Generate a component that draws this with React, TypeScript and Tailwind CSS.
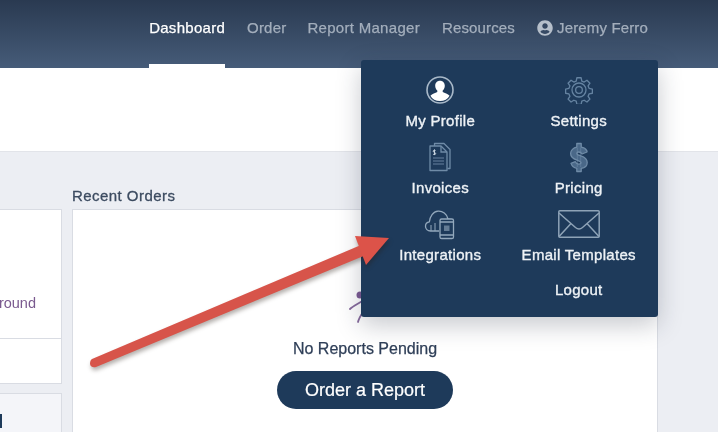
import { FaUserCircle } from "react-icons/fa";

function ProfileIcon() {
    return (
        <svg width="32" height="32" viewBox="0 0 32 32" fill="none">
            <circle cx="16" cy="16" r="13" fill="#1e3a5a" stroke="#a9b9c9" strokeWidth="1.600" />
            <path d="M16 6.800c-3 0-4.800 2.300-4.800 5 0 2 .9 3.800 2.100 4.800v1.500c-1.900 1.200-5.200 1.700-6.900 3.600 1.700 3.400 5.400 5.300 9.600 5.300s7.900-1.900 9.600-5.300c-1.700-1.900-5-2.400-6.900-3.600v-1.500c1.200-1 2.100-2.800 2.100-4.800 0-2.700-1.800-5-4.800-5z" fill="#ffffff" />
        </svg>
    );
}

function GearIcon() {
    return (
        <svg width="28" height="28" viewBox="0 0 32 32" fill="none" stroke="#6583a1" strokeWidth="1.500">
            <path d="M13.600 2h4.800l.8 3.800 2.700 1.100 3.200-2.100 3.400 3.400-2.100 3.200 1.100 2.700 3.800.8v4.800l-3.800.8-1.100 2.700 2.100 3.200-3.400 3.400-3.200-2.100-2.700 1.100-.8 3.800h-4.800l-.8-3.800-2.700-1.100-3.200 2.100-3.400-3.400 2.100-3.200-1.100-2.700-3.800-.8v-4.800l3.800-.8 1.100-2.700-2.100-3.200 3.400-3.400 3.200 2.100 2.700-1.100z" strokeLinejoin="round" />
            <circle cx="16" cy="16" r="8" />
            <circle cx="16" cy="16" r="3.800" />
        </svg>
    );
}

function InvoiceIcon() {
    return (
        <svg width="32" height="32" viewBox="0 0 32 32" fill="none" stroke="#6f8ba7" strokeWidth="1.300">
            <path d="M10.500 5V2.500h9.500l6 6v19h-2.500" strokeLinejoin="round" />
            <path d="M6 5h11l6 6v18.500H6z" strokeLinejoin="round" />
            <path d="M17 5v6h6" />
            <path d="M9 17h11M9 20h11M9 23h11" strokeWidth="1.500" opacity="0.6" />
            <path d="M11.500 9.500c-.8-.6-2.300-.4-2.300.7 0 1.400 2.500 1 2.500 2.400 0 1.100-1.700 1.300-2.600.6M10.500 8.500v5.500" stroke="#c7d3de" strokeWidth="1" />
        </svg>
    );
}

function DollarIcon() {
    return (
        <svg width="32" height="32" viewBox="0 0 32 32" fill="#4a6888" stroke="#6f8ba7" strokeWidth="1.300">
            <path d="M24 11v-1c-1.200-2.200-3.600-3.500-5.800-3.800V2.500h-4.400v3.700C10.400 6.700 7.600 9.300 7.600 12.500c0 3.800 2.800 5.400 6.400 6.600 2.600.9 4 1.300 4 2.500 0 1-1 1.500-2.200 1.500-1.600 0-2.800-.9-3.500-2.400L8 22.400c1 2.800 3.200 4.500 5.800 4.900v3.200h4.400v-3.200c3.400-.5 6-2.700 6-5.900 0-3.800-2.800-5.400-6.400-6.600-2.600-.9-4-1.300-4-2.400 0-.9.9-1.400 2-1.400 1.500 0 2.500.7 3.200 2z" strokeLinejoin="round" />
            <path d="M14.300 7v19M17.700 7v19" fill="none" strokeWidth="0.900" opacity="0.6" />
        </svg>
    );
}

function CloudIcon() {
    return (
        <svg width="32" height="32" viewBox="0 0 32 32" fill="none" stroke="#93a8bc" strokeWidth="1.300">
            <path d="M15 23H6.500C3.500 23 1.500 20.800 1.500 18.300c0-2.300 1.700-4.200 3.900-4.500C6 8.500 9 3.600 14 3.200c4.500-.4 9 2.800 10 7.800.3.100 2 .2 3.500.7" strokeLinejoin="round" />
            <rect x="16" y="11" width="13.500" height="19.500" rx="1.600" fill="#1e3a5a" />
            <path d="M16 14h13.500M16 27h13.500" />
            <rect x="20" y="17.500" width="5.500" height="5.500" fill="#93a8bc" stroke="none" opacity="0.6" />
            <path d="M7 17v6M11 15v8" strokeWidth="1" />
        </svg>
    );
}

function EnvelopeIcon() {
    return (
        <svg width="42" height="28" viewBox="0 0 42 28" fill="none" stroke="#8ea3b7" strokeWidth="1.500">
            <rect x="0.800" y="0.800" width="40.400" height="26.400" rx="1" />
            <path d="M1 3l16.500 14.500c2 1.600 5 1.600 7 0L41 3M1 26.500l12-13M41 26.500l-12-13" />
        </svg>
    );
}

const menu = [
    { label: "My Profile", icon: <ProfileIcon /> },
    { label: "Settings", icon: <GearIcon /> },
    { label: "Invoices", icon: <InvoiceIcon /> },
    { label: "Pricing", icon: <DollarIcon /> },
    { label: "Integrations", icon: <CloudIcon /> },
    { label: "Email Templates", icon: <EnvelopeIcon /> },
];

export default function App() {
    return (
        <div className="relative w-[718px] h-[432px] overflow-hidden bg-[#eceef3] font-['Liberation_Sans',Arial,sans-serif] blur-[0.4px]">
            <header className="h-[68px] bg-gradient-to-b from-[#2a3a51] to-[#465c79] flex justify-end items-start pr-[70px] gap-[22px] text-[15px] text-[#a3aebc] [-webkit-text-stroke:0.25px]">
                <a className="h-[68px] pt-[19px] leading-[18px] text-white border-b-[4px] border-white tracking-[0.28px]">Dashboard</a>
                <a className="-mr-[1px] pt-[19px] leading-[18px] tracking-[0.2px]">Order</a>
                <a className="pt-[19px] leading-[18px] tracking-[0.3px]">Report Manager</a>
                <a className="pt-[19px] leading-[18px] tracking-[0.15px]">Resources</a>
                <a className="pt-[19px] leading-[18px] flex items-center gap-[4px] tracking-[0.15px]">
                    <FaUserCircle className="w-4 h-4 text-[#b6bfca]" />
                    Jeremy Ferro
                </a>
            </header>
            <div className="h-[84px] bg-white border-b border-[#e2e4e9]" />
            <main className="flex gap-[10px]">
                <div className="w-[62px] shrink-0 pt-[57px] flex flex-col">
                    <div className="h-[130px] bg-white border border-l-0 border-[#d9dce3] flex justify-end items-center pr-[25px] pt-[60px] overflow-hidden">
                        <span className="text-[14.5px] text-[#7a5a8f] whitespace-nowrap">round</span>
                    </div>
                    <div className="h-[45px] bg-white border border-t-0 border-l-0 border-[#d9dce3]" />
                    <div className="mt-[9px] h-[60px] bg-[#f4f5f9] border border-l-0 border-[#d9dce3] pt-[20px] overflow-hidden">
                        <span className="block w-[2px] h-[14px] bg-[#1e3a5a]" />
                    </div>
                </div>
                <div className="w-[586px] shrink-0 pt-[35px]">
                    <h2 className="text-[15px] leading-[18px] mb-[4px] text-[#3c4b60] tracking-[0.45px] [-webkit-text-stroke:0.3px]">Recent Orders</h2>
                    <div className="h-[240px] bg-white border border-[#d9dce3] flex flex-col items-center pt-[80px]">
                        <svg width="34" height="34" viewBox="0 0 34 34" fill="none" stroke="#866a9c" strokeWidth="1.800" className="ml-[1px]">
                            <circle cx="11" cy="5" r="3.500" fill="#7b5a93" stroke="none" />
                            <path d="M1 19c3-3 8-5 14-9" strokeLinecap="round" />
                            <path d="M9 32c1-4 3-7 5-10" strokeLinecap="round" />
                        </svg>
                        <p className="mt-[15px] text-[16px] leading-[20px] text-[#2f3f58] [-webkit-text-stroke:0.25px]">No Reports Pending</p>
                        <button className="mt-[12px] w-[176px] h-[38px] rounded-full bg-[#1e3a5a] text-white text-[18px] [-webkit-text-stroke:0.2px]">Order a Report</button>
                    </div>
                </div>
            </main>

            {/* dropdown sits over the page */}
            <div className="absolute left-[361px] top-[60px] w-[297px] rounded-[3px] bg-[#1e3a5a] px-[10px] pt-[14px] pb-[17px] grid grid-cols-2 gap-x-0 gap-y-[10px] shadow-[0_8px_24px_rgba(30,40,60,0.25)] [-webkit-text-stroke:0.35px]">
                {menu.map((item) => (
                    <div key={item.label} className="flex flex-col items-center">
                        <div className="h-8 flex items-center justify-center">{item.icon}</div>
                        <span className="mt-[5px] text-[15px] leading-5 text-[#eef2f6] whitespace-nowrap tracking-[0.3px]">{item.label}</span>
                    </div>
                ))}
                <span className="col-start-2 text-center mt-[5px] text-[15px] leading-5 text-[#eef2f6] tracking-[0.3px]">Logout</span>
            </div>

            {/* annotation arrow */}
            <svg className="absolute left-0 top-0 drop-shadow-[1px_3px_2px_rgba(40,30,20,0.35)]" width="718" height="432" viewBox="0 0 718 432" fill="none">
                <path d="M92 359L361 245L366 255L96 367Q91 368 90 364Q90 360 92 359Z" fill="#d7544a" />
                <path d="M355 236L389 238L366 265Z" fill="#dc5349" />
            </svg>
        </div>
    );
}
